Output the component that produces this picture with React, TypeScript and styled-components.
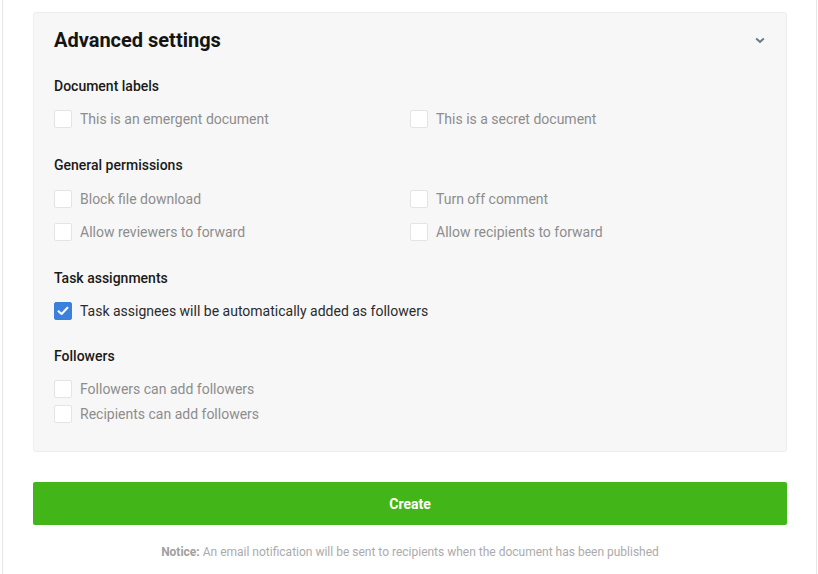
import React from "react";
import styled, { createGlobalStyle } from "styled-components";

const Global = createGlobalStyle`
  html, body { margin: 0; padding: 0; background: #ffffff; }
  body { font-family: Roboto, "Liberation Sans", Arial, sans-serif; -webkit-font-smoothing: antialiased; }
  * { box-sizing: border-box; }
`;

const Card = styled.div`
  margin-left: 2px;
  width: 815px;
  min-height: 574px;
  border-left: 1px solid #e6e6e6;
  border-right: 1px solid #e6e6e6;
  padding: 12px 29px 0 30px;
`;

const Panel = styled.section`
  background: #f7f7f7;
  border: 1px solid #ededed;
  border-radius: 3px;
  padding: 13px 20px 27px 20px;
`;

const Header = styled.div`
  display: flex;
  align-items: center;
  justify-content: space-between;
  height: 28px;
`;

const Title = styled.h2`
  margin: 0;
  font-size: 20px;
  font-weight: 700;
  color: #141414;
  line-height: 28px;
`;

const Chevron = styled.button`
  border: 0;
  background: none;
  padding: 0;
  margin-right: 1px;
  display: flex;
  align-items: center;
  cursor: pointer;
`;

const Section = styled.div<{ $top: number }>`
  margin-top: ${(p) => p.$top}px;
`;

const SectionTitle = styled.div<{ $gap?: number }>`
  font-size: 14px;
  font-weight: 500;
  color: #1a1a1a;
  line-height: 20px;
  margin-bottom: ${(p) => p.$gap ?? 13}px;
`;

const Grid = styled.div<{ $gap: number }>`
  display: grid;
  grid-template-columns: 356px 1fr;
  row-gap: ${(p) => p.$gap}px;
`;

const List = styled.div<{ $gap: number }>`
  display: flex;
  flex-direction: column;
  gap: ${(p) => p.$gap}px;
`;

const Row = styled.label`
  display: flex;
  align-items: center;
  height: 20px;
  gap: 8px;
  cursor: pointer;
`;

const Box = styled.span<{ $checked?: boolean }>`
  width: 18px;
  height: 18px;
  flex: none;
  border-radius: 2px;
  border: 1px solid ${(p) => (p.$checked ? "#3c80de" : "#e4e4e4")};
  background: ${(p) => (p.$checked ? "#3c80de" : "#ffffff")};
  display: flex;
  align-items: center;
  justify-content: center;
`;

const Label = styled.span<{ $checked?: boolean }>`
  font-size: 14px;
  line-height: 20px;
  color: ${(p) => (p.$checked ? "#2b2b2b" : "#8d8d8d")};
`;

const CreateButton = styled.button`
  display: block;
  width: 100%;
  margin-top: 30px;
  height: 43px;
  border: 0;
  border-radius: 2px;
  background: #42b619;
  color: #ffffff;
  font-family: Roboto, "Liberation Sans", Arial, sans-serif;
  font-size: 14px;
  font-weight: 700;
  cursor: pointer;
`;

const Notice = styled.p`
  margin: 19px 0 0;
  text-align: center;
  font-size: 12px;
  line-height: 16px;
  color: #ababab;
  b { font-weight: 700; color: #a0a0a0; }
`;

const Check = ({ label, checked }: { label: string; checked?: boolean }) => (
  <Row>
    <Box $checked={checked}>
      {checked && (
        <svg width="12" height="10" viewBox="0 0 12 10">
          <path d="M1.5 5.2 L4.6 8 L10.5 1.8" fill="none" stroke="#fff" strokeWidth="2" strokeLinecap="round" strokeLinejoin="round" />
        </svg>
      )}
    </Box>
    <Label $checked={checked}>{label}</Label>
  </Row>
);

export default function App() {
  return (
    <>
      <Global />
      <Card>
        <Panel>
          <Header>
            <Title>Advanced settings</Title>
            <Chevron aria-label="collapse">
              <svg width="10" height="7" viewBox="0 0 10 7">
                <path d="M1.2 1.5 L5 5 L8.8 1.5" fill="none" stroke="#6b7888" strokeWidth="2" />
              </svg>
            </Chevron>
          </Header>

          <Section $top={22}>
            <SectionTitle>Document labels</SectionTitle>
            <Grid $gap={13}>
              <Check label="This is an emergent document" />
              <Check label="This is a secret document" />
            </Grid>
          </Section>

          <Section $top={26}>
            <SectionTitle $gap={14}>General permissions</SectionTitle>
            <Grid $gap={13}>
              <Check label="Block file download" />
              <Check label="Turn off comment" />
              <Check label="Allow reviewers to forward" />
              <Check label="Allow recipients to forward" />
            </Grid>
          </Section>

          <Section $top={26}>
            <SectionTitle>Task assignments</SectionTitle>
            <List $gap={5}>
              <Check label="Task assignees will be automatically added as followers" checked />
            </List>
          </Section>

          <Section $top={25}>
            <SectionTitle>Followers</SectionTitle>
            <List $gap={5}>
              <Check label="Followers can add followers" />
              <Check label="Recipients can add followers" />
            </List>
          </Section>
        </Panel>

        <CreateButton>Create</CreateButton>
        <Notice>
          <b>Notice:</b> An email notification will be sent to recipients when the document has been published
        </Notice>
      </Card>
    </>
  );
}
